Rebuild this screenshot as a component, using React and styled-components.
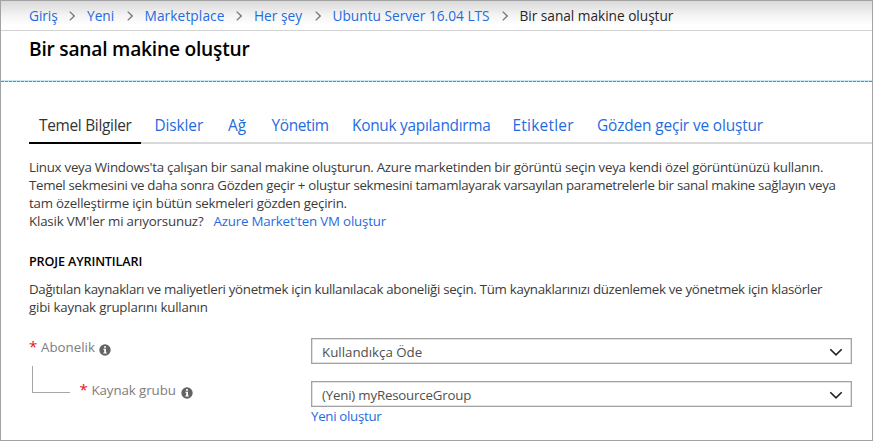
import React from 'react';
import styled, { createGlobalStyle } from 'styled-components';

const GlobalStyle = createGlobalStyle`
  * { box-sizing: border-box; }
  body {
    margin: 0;
    background: #fff;
    color: #3b3b3b;
    font-family: "Open Sans", "Noto Sans", sans-serif;
    font-size: 13.3px;
  }
`;

const Window = styled.div`
  width: 873px;
  height: 441px;
  border: 1px solid #a3a3a3;
  overflow: hidden;
`;

const Breadcrumbs = styled.nav`
  display: flex;
  height: 30px;
  padding: 4px 0 0 28px;
  background: linear-gradient(#d9d9d9, #f4f4f4 50%, #fff 85%);
  border-bottom: 1px solid #d3d3d3;
  font-size: 13.7px;
  line-height: 22px;
`;

const Crumb = styled.span`
  display: flex;
  flex: none;
  width: ${(p) => p.$width}px;
  letter-spacing: ${(p) => p.$tracking || 0}px;
  color: ${(p) => (p.$current ? '#262626' : '#1f6be0')};
  white-space: nowrap;
`;

const CrumbArrow = styled.svg`
  flex: none;
  width: 6px;
  height: 10px;
  margin: 6px 12px 0 auto;
  fill: none;
  stroke: #777;
  stroke-width: 1.3;
`;

const TitleBar = styled.header`
  height: 51px;
  padding: 2px 0 0 28px;
  background:
    repeating-linear-gradient(90deg, #12b0e2 0 3px, #a5e3f5 3px 4px) 0 100% / 100% 1px no-repeat,
    linear-gradient(#c4eaf5, #c4eaf5) 0 calc(100% - 1px) / 100% 1px no-repeat,
    #fff;
`;

const Title = styled.h1`
  margin: 0;
  color: #000;
  font-size: 19.2px;
  font-weight: 600;
  line-height: 32px;
  letter-spacing: -0.23px;
`;

const Tabs = styled.nav`
  display: flex;
  height: 62px;
  margin-left: 28px;
  padding-top: 32px;
  border-bottom: 2px solid #d9d9d9;
  font-size: 15.4px;
`;

const Tab = styled.span`
  flex: none;
  height: 30px;
  width: ${(p) => p.$width}px;
  padding-left: ${(p) => (p.$active ? 10 : 0)}px;
  margin-right: ${(p) => (p.$active ? 13.5 : 0)}px;
  border-bottom: 2px solid ${(p) => (p.$active ? '#000' : 'transparent')};
  color: ${(p) => (p.$active ? '#333' : '#1f6be0')};
  letter-spacing: ${(p) => p.$tracking || 0}px;
  line-height: 23px;
  white-space: nowrap;
`;

const Content = styled.main`
  padding: 15px 20px 0 28px;
`;

const Line = styled.div`
  height: 18px;
  line-height: 17.8px;
  letter-spacing: ${(p) => p.$tracking || 0}px;
  white-space: nowrap;
`;

const Link = styled.a`
  color: #1f6be0;
  letter-spacing: ${(p) => p.$tracking || 0}px;
  margin-left: ${(p) => p.$gap || 0}px;
`;

const SectionTitle = styled.h2`
  margin: 22px 0 10px;
  color: #000;
  font-size: 12.6px;
  font-weight: 600;
  line-height: 18px;
  letter-spacing: -0.13px;
`;

const Form = styled.div`
  display: grid;
  grid-template-columns: 282px 541px;
  grid-template-rows: 43px 26px 20px;
  margin-top: 21px;
`;

const Label = styled.label`
  display: flex;
  align-items: flex-start;
  color: #7d7d7d;
  line-height: 19px;
  letter-spacing: ${(p) => p.$tracking || 0}px;
  white-space: nowrap;
`;

const Required = styled.span`
  width: 12px;
  color: #e81123;
  font-size: 15px;
  line-height: 17px;
`;

const InfoSvg = styled.svg`
  width: 12px;
  height: 12px;
  margin: 5.5px 0 0 ${(p) => p.$gap}px;
`;

const Branch = styled.span`
  flex: none;
  width: 38px;
  height: 27px;
  margin: -15px 9.5px 0 3px;
  border: solid #a6a6a6;
  border-width: 0 0 1px 1px;
`;

const Select = styled.div`
  display: flex;
  align-items: center;
  justify-content: space-between;
  height: 26px;
  padding: 1px 8.5px 0 10px;
  border: 1px solid #a3a3a3;
  box-shadow: inset 0 0 0 0.5px #c4c4c4;
  color: #505050;
  letter-spacing: ${(p) => p.$tracking || 0}px;
`;

const ChevronSvg = styled.svg`
  width: 14px;
  height: 8px;
  fill: none;
  stroke: #222;
  stroke-width: 1.6;
`;

const CreateRow = styled.div`
  grid-column: 2;
  line-height: 19px;
`;

const Info = ({ gap }) => (
  <InfoSvg viewBox="0 0 12 12" $gap={gap}>
    <circle cx="6" cy="6" r="5.7" fill="#636363" />
    <path d="M5 2.2h2v1.6H5zM4.4 4.8H7v3.7h.8v1H4.3v-1h.9V5.8h-.8z" fill="#fff" />
  </InfoSvg>
);

const Chevron = () => (
  <ChevronSvg viewBox="0 0 14 8">
    <path d="M1.3 1.2 7 6.8l5.7-5.6" />
  </ChevronSvg>
);

const crumbs = [
  { text: 'Giriş', width: 58, tracking: -0.05 },
  { text: 'Yeni', width: 57.5 },
  { text: 'Marketplace', width: 109.5, tracking: 0.1 },
  { text: 'Her şey', width: 78.5 },
  { text: 'Ubuntu Server 16.04 LTS', width: 187 },
];

const tabs = [
  { text: 'Temel Bilgiler', width: 112, tracking: -0.29, active: true },
  { text: 'Diskler', width: 73.5, tracking: -0.1 },
  { text: 'Ağ', width: 43.5 },
  { text: 'Yönetim', width: 80.5, tracking: -0.35 },
  { text: 'Konuk yapılandırma', width: 160.5, tracking: -0.27 },
  { text: 'Etiketler', width: 84.5, tracking: 0.25 },
  { text: 'Gözden geçir ve oluştur', width: 168, tracking: -0.14 },
];

export default function App() {
  return (
    <>
      <GlobalStyle />
      <Window>
        <Breadcrumbs>
          {crumbs.map((c) => (
            <Crumb key={c.text} $width={c.width} $tracking={c.tracking}>
              {c.text}
              <CrumbArrow viewBox="0 0 6 10">
                <path d="M.7.6 5.2 5 .7 9.4" />
              </CrumbArrow>
            </Crumb>
          ))}
          <Crumb $current $width={160} $tracking={-0.03}>Bir sanal makine oluştur</Crumb>
        </Breadcrumbs>
        <TitleBar>
          <Title>Bir sanal makine oluştur</Title>
        </TitleBar>
        <Tabs>
          {tabs.map((t) => (
            <Tab key={t.text} $width={t.width} $tracking={t.tracking} $active={t.active}>
              {t.text}
            </Tab>
          ))}
        </Tabs>
        <Content>
          <Line $tracking={-0.255}>
            Linux veya Windows'ta çalışan bir sanal makine oluşturun. Azure marketinden bir görüntü seçin veya kendi özel görüntünüzü kullanın.
          </Line>
          <Line $tracking={-0.305}>
            Temel sekmesini ve daha sonra Gözden geçir + oluştur sekmesini tamamlayarak varsayılan parametrelerle bir sanal makine sağlayın veya
          </Line>
          <Line $tracking={-0.22}>tam özelleştirme için bütün sekmeleri gözden geçirin.</Line>
          <Line $tracking={-0.18}>
            Klasik VM'ler mi arıyorsunuz?
            <Link $gap={10} $tracking={-0.18}>Azure Market'ten VM oluştur</Link>
          </Line>
          <SectionTitle>PROJE AYRINTILARI</SectionTitle>
          <Line $tracking={-0.3}>
            Dağıtılan kaynakları ve maliyetleri yönetmek için kullanılacak aboneliği seçin. Tüm kaynaklarınızı düzenlemek ve yönetmek için klasörler
          </Line>
          <Line $tracking={-0.2}>gibi kaynak gruplarını kullanın</Line>
          <Form>
            <Label>
              <Required>*</Required>
              Abonelik
              <Info gap={4} />
            </Label>
            <Select>
              Kullandıkça Öde
              <Chevron />
            </Select>
            <Label $tracking={-0.08}>
              <Branch />
              <Required>*</Required>
              Kaynak grubu
              <Info gap={5} />
            </Label>
            <Select $tracking={-0.2}>
              (Yeni) myResourceGroup
              <Chevron />
            </Select>
            <CreateRow>
              <Link $tracking={-0.3}>Yeni oluştur</Link>
            </CreateRow>
          </Form>
        </Content>
      </Window>
    </>
  );
}
